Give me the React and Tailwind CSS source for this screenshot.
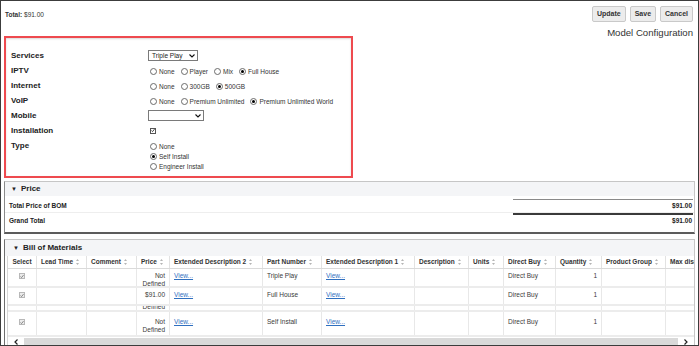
import React from "react";

const FONT = { fontFamily: '"Liberation Sans", Arial, sans-serif' };

function Radio({ checked, label }) {
  return (
    <span className="flex items-center gap-[2px]">
      <span className="flex h-[7px] w-[7px] items-center justify-center rounded-full border border-[#6b6b6b] bg-white">
        {checked && <span className="h-[3px] w-[3px] rounded-full bg-black" />}
      </span>
      <span>{label}</span>
    </span>
  );
}

function Select({ value, width }) {
  return (
    <div
      className={`flex h-[11px] items-center justify-between border border-[#7a7a7a] bg-white pl-[3px] pr-[2px] text-[6.5px] text-[#222] ${width}`}
    >
      <span>{value}</span>
      <svg width="6" height="4" viewBox="0 0 6 4">
        <path d="M0.5 0.5 L3 3 L5.5 0.5" fill="none" stroke="#111" strokeWidth="1.1" />
      </svg>
    </div>
  );
}

function SortIcon() {
  return (
    <svg width="3" height="6" viewBox="0 0 3 6" className="ml-[3px] inline-block">
      <path d="M1.5 0 L3 2 L0 2 Z M1.5 6 L3 4 L0 4 Z" fill="#b5b5b5" />
    </svg>
  );
}

function Check({ disabled }) {
  return (
    <span
      className={`flex h-[6px] w-[6px] items-center justify-center border ${
        disabled ? "border-[#b8b8b8] bg-[#ececec]" : "border-[#555] bg-white"
      }`}
    >
      <svg width="5" height="5" viewBox="0 0 5 5">
        <path
          d="M0.6 2.6 L1.9 3.9 L4.4 0.8"
          fill="none"
          stroke={disabled ? "#6c6c6c" : "#111"}
          strokeWidth="1"
        />
      </svg>
    </span>
  );
}

const columns = [
  { name: "Select", w: "w-[29px]", center: true, sort: false },
  { name: "Lead Time", w: "w-[50px]" },
  { name: "Comment", w: "w-[50px]" },
  { name: "Price", w: "w-[33px]" },
  { name: "Extended Description 2", w: "w-[93px]" },
  { name: "Part Number", w: "w-[59px]" },
  { name: "Extended Description 1", w: "w-[93px]" },
  { name: "Description", w: "w-[54px]" },
  { name: "Units", w: "w-[35px]" },
  { name: "Direct Buy", w: "w-[52px]" },
  { name: "Quantity", w: "w-[46px]" },
  { name: "Product Group", w: "w-[64px]" },
  { name: "Max discount", w: "w-[60px]" },
];

const rows = [
  { price: ["Not", "Defined"], part: "Triple Play", h: "h-[19px]", pt: "pt-[3px]" },
  { price: ["$91.00"], part: "Full House", h: "h-[18px]", pt: "pt-[3px]" },
  { price: ["Not", "Defined"], part: "Self Install", h: "h-[25px]", pt: "pt-[6px]" },
];

function Row({ row }) {
  const cell = `shrink-0 border-r border-[#e8e8e8] px-[4px] ${row.pt}`;
  return (
    <div className={`flex border-b-2 border-[#ececec] text-[6.5px] leading-[7.5px] text-[#3a3a3a] ${row.h}`}>
      <div className={`${cell} flex w-[29px] justify-center`}>
        <div className="pt-px">
          <Check disabled />
        </div>
      </div>
      <div className={`${cell} w-[50px]`} />
      <div className={`${cell} w-[50px]`} />
      <div className={`${cell} w-[33px] text-right`}>
        {row.price.map((p) => (
          <div key={p}>{p}</div>
        ))}
      </div>
      <div className={`${cell} w-[93px]`}>
        <span className="text-[#2f6fbf] underline">View...</span>
      </div>
      <div className={`${cell} w-[59px]`}>{row.part}</div>
      <div className={`${cell} w-[93px]`}>
        <span className="text-[#2f6fbf] underline">View...</span>
      </div>
      <div className={`${cell} w-[54px]`} />
      <div className={`${cell} w-[35px]`} />
      <div className={`${cell} w-[52px]`}>Direct Buy</div>
      <div className={`${cell} w-[46px] text-right`}>1</div>
      <div className={`${cell} w-[64px]`} />
      <div className={`${cell} w-[60px]`} />
    </div>
  );
}

function Strip() {
  const cell = "shrink-0 border-r border-[#e8e8e8]";
  return (
    <div className="flex h-[6px] border-b-2 border-[#ececec] text-[6.5px] text-[#3a3a3a]">
      <div className={`${cell} w-[29px]`} />
      <div className={`${cell} w-[50px]`} />
      <div className={`${cell} w-[50px]`} />
      <div className={`${cell} w-[33px] overflow-hidden px-[4px] text-right leading-[7.5px]`}>
        <div className="-mt-[3px]">Defined</div>
      </div>
      <div className={`${cell} w-[93px]`} />
      <div className={`${cell} w-[59px]`} />
      <div className={`${cell} w-[93px]`} />
      <div className={`${cell} w-[54px]`} />
      <div className={`${cell} w-[35px]`} />
      <div className={`${cell} w-[52px]`} />
      <div className={`${cell} w-[46px]`} />
      <div className={`${cell} w-[64px]`} />
      <div className={`${cell} w-[60px]`} />
    </div>
  );
}

export default function App() {
  return (
    <div
      style={FONT}
      className="h-[346px] w-[699px] overflow-hidden border border-[#3c3c3c] bg-white"
    >
      {/* top bar */}
      <div className="flex items-start justify-between pl-[4px] pr-[5px] pt-[5px]">
        <div className="pt-[4px] text-[6.5px] text-[#333]">
          <span className="font-bold">Total:</span> $91.00
        </div>
        <div className="flex flex-col items-end">
          <div className="flex gap-[4px]">
            {["Update", "Save", "Cancel"].map((b) => (
              <button
                key={b}
                className="h-[16px] rounded-[2px] border border-[#c9c9c9] bg-[#ececec] px-[4px] text-[7px] font-bold text-[#333]"
              >
                {b}
              </button>
            ))}
          </div>
          <div className="mt-[5px] text-[9.6px] leading-[11px] text-[#333]">Model Configuration</div>
        </div>
      </div>

      {/* configuration form */}
      <div className="-mt-[2px] ml-[3px] w-[349px] border-2 border-[#ee4a4f] pb-[6px] pl-[5px] pt-[10px] shadow-[inset_0_1px_2px_rgba(0,0,0,0.15)]">
        <div className="grid grid-cols-[137px_1fr] text-[#222]">
          <div className="flex h-[15px] items-center text-[8px] font-bold">Services</div>
          <div className="flex h-[15px] items-center">
            <Select value="Triple Play" width="w-[50px]" />
          </div>

          <div className="flex h-[15px] items-center text-[8px] font-bold">IPTV</div>
          <div className="flex h-[15px] items-center gap-[6px] pl-[2px] pt-[2px] text-[6.5px] text-[#333]">
            <Radio label="None" />
            <Radio label="Player" />
            <Radio label="Mix" />
            <Radio label="Full House" checked />
          </div>

          <div className="flex h-[15px] items-center text-[8px] font-bold">Internet</div>
          <div className="flex h-[15px] items-center gap-[6px] pl-[2px] pt-[2px] text-[6.5px] text-[#333]">
            <Radio label="None" />
            <Radio label="300GB" />
            <Radio label="500GB" checked />
          </div>

          <div className="flex h-[15px] items-center text-[8px] font-bold">VoIP</div>
          <div className="flex h-[15px] items-center gap-[6px] pl-[2px] pt-[2px] text-[6.5px] text-[#333]">
            <Radio label="None" />
            <Radio label="Premium Unlimited" />
            <Radio label="Premium Unlimited World" checked />
          </div>

          <div className="flex h-[15px] items-center text-[8px] font-bold">Mobile</div>
          <div className="flex h-[15px] items-center">
            <Select value="" width="w-[56px]" />
          </div>

          <div className="flex h-[15px] items-center text-[8px] font-bold">Installation</div>
          <div className="flex h-[15px] items-center pl-[2px]">
            <Check />
          </div>

          <div className="flex h-[15px] items-center self-start text-[8px] font-bold">Type</div>
          <div className="flex flex-col gap-[3px] pl-[2px] pt-[5px] text-[6.5px] leading-[7px] text-[#333]">
            <Radio label="None" />
            <Radio label="Self Install" checked />
            <Radio label="Engineer Install" />
          </div>
        </div>
      </div>

      {/* Price panel */}
      <div className="ml-[3px] mt-[3px] w-[691px] border border-[#c6c6c6] border-b-2 border-b-[#5c5c5c] border-l-[#8a8a8a]">
        <div className="flex h-[14px] items-center gap-[4px] bg-[#f4f5f7] pl-[6px] text-[8px] font-bold text-[#222]">
          <span className="text-[6px]">▼</span>
          <span>Price</span>
        </div>
        <div className="pb-[5px] text-[6.5px] font-bold text-[#222]">
          <div className="flex items-end justify-between border-b border-[#eeeeee] pl-[4px] pr-[1px] pt-[3px]">
            <div className="h-[12px] leading-[12px]">Total Price of BOM</div>
            <div className="h-[13px] w-[180px] border-t border-[#8a8a8a] pr-[1px] text-right leading-[12px]">
              $91.00
            </div>
          </div>
          <div className="flex items-end justify-between pl-[4px] pr-[1px]">
            <div className="h-[13px] leading-[13px]">Grand Total</div>
            <div className="h-[14px] w-[180px] border-t-2 border-[#3a3a3a] pr-[1px] text-right leading-[12px]">
              $91.00
            </div>
          </div>
        </div>
      </div>

      {/* Bill of Materials panel */}
      <div className="ml-[3px] mt-[5px] w-[691px] border border-[#c6c6c6] border-l-[#6e6e6e] pl-[2px]">
        <div className="-ml-[2px] flex h-[16px] items-center gap-[4px] bg-[#f4f5f7] pl-[8px] text-[8px] font-bold text-[#222]">
          <span className="text-[6px]">▼</span>
          <span>Bill of Materials</span>
        </div>
        <div className="overflow-hidden border-l border-[#d6d6d6]">
          <div className="flex h-[13px] items-center border-b border-[#dadada] text-[6.5px] font-bold text-[#333]">
            {columns.map((c) => (
              <div
                key={c.name}
                className={`flex h-full shrink-0 items-center overflow-hidden whitespace-nowrap border-r border-[#e2e2e2] px-[4px] ${c.w} ${
                  c.center ? "justify-center" : ""
                }`}
              >
                {c.name}
                {c.sort !== false && <SortIcon />}
              </div>
            ))}
          </div>
          <Row row={rows[0]} />
          <Row row={rows[1]} />
          <Strip />
          <Row row={rows[2]} />
          {/* horizontal scrollbar */}
          <div className="flex h-[10px] items-center">
            <div className="flex h-full w-[16px] items-center justify-center text-[#333]">
              <svg width="4" height="6" viewBox="0 0 4 6">
                <path d="M3.5 0.5 L1 3 L3.5 5.5" fill="none" stroke="#222" strokeWidth="1.2" />
              </svg>
            </div>
            <div className="h-[9px] flex-1 bg-[#d9d9d9]" />
            <div className="flex h-full w-[16px] items-center justify-center">
              <svg width="4" height="6" viewBox="0 0 4 6">
                <path d="M0.5 0.5 L3 3 L0.5 5.5" fill="none" stroke="#222" strokeWidth="1.2" />
              </svg>
            </div>
          </div>
        </div>
      </div>
    </div>
  );
}
